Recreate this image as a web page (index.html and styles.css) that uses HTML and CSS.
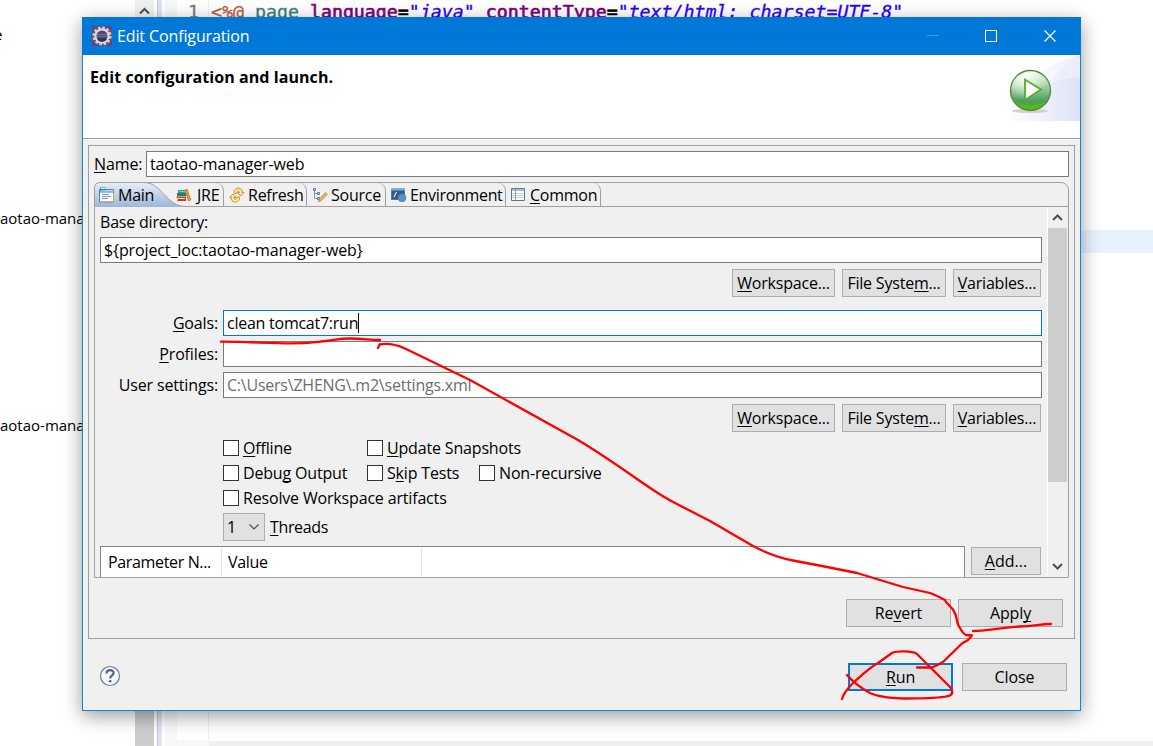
FILE: index.html
```
<!DOCTYPE html>
<html lang="en">
<head>
    <meta charset="UTF-8">
    <meta name="viewport" content="width=device-width, initial-scale=1.0">
    <title>Edit Configuration</title>
    <link rel="stylesheet" href="styles.css">
</head>
<body>
    <!-- IDE behind the dialog -->
    <div class="ide">
        <div class="explorer">
            <span class="node node-first">e</span>
            <span class="node node-second">aotao-manager</span>
            <span class="node node-third">aotao-manager</span>
        </div>
        <div class="explorer-scroll">
            <svg width="19" height="20" viewBox="0 0 19 20"><path d="M5 13.5 L9.5 9 L14 13.5" fill="none" stroke="#505050" stroke-width="2"/></svg>
            <div class="explorer-thumb"></div>
        </div>
        <div class="sash"></div>
        <div class="editor">
            <div class="ruler"></div>
            <div class="line-numbers">1</div>
            <div class="code">
                <div class="code-line"><span class="tag">&lt;%@</span> <span class="name">page</span> <span class="attr">language</span><span class="equals">=</span><i>"java"</i> <span class="attr">contentType</span><span class="equals">=</span><i>"text/html; charset=UTF-8"</i></div>
                <div class="current-line"></div>
            </div>
        </div>
    </div>

    <!-- Dialog -->
    <div class="dialog">
        <div class="title-bar">
            <svg class="app-icon" width="20" height="20" viewBox="0 0 20 20">
                <rect width="20" height="20" fill="#594a7c"/>
                <circle cx="10" cy="10" r="8.300" fill="none" stroke="#cfcdc8" stroke-width="2.600" stroke-dasharray="2.600 1.750"/>
                <circle cx="10" cy="10" r="6.600" fill="#4a4678" stroke="#dddbd3" stroke-width="2.200"/>
                <path d="M5 8.500h10M4.600 10.500h10.800" stroke="#77719c" stroke-width="1"/>
                <path d="M5 12.500h10a5.500 5.500 0 0 1-10 0z" fill="#2f2b57"/>
            </svg>
            <span class="title">Edit Configuration</span>
            <svg class="window-buttons" width="177" height="38" viewBox="0 0 177 38" fill="none">
                <path d="M23 18.500h12" stroke="#3f9ae2"/>
                <rect x="81.500" y="13.500" width="11" height="11" stroke="#fff"/>
                <path d="M140.500 13.500l11 11M151.500 13.500l-11 11" stroke="#fff" stroke-width="1.200"/>
            </svg>
        </div>

        <div class="header">
            <h1>Edit configuration and launch.</h1>
            <svg class="banner" width="80" height="66" viewBox="0 0 80 66">
                <defs>
                    <linearGradient id="sweep" x1="0" x2="1">
                        <stop offset="0" stop-color="#fff"/>
                        <stop offset=".5" stop-color="#eef1fb"/>
                        <stop offset="1" stop-color="#dde3f6"/>
                    </linearGradient>
                    <linearGradient id="ball" x1="0" x2="0" y1="0" y2="1">
                        <stop offset="0" stop-color="#e4f1dc"/>
                        <stop offset=".3" stop-color="#b5dcb0"/>
                        <stop offset=".75" stop-color="#4f9f62"/>
                        <stop offset="1" stop-color="#48ad12"/>
                    </linearGradient>
                    <radialGradient id="shine" cx=".35" cy=".15" r=".6">
                        <stop offset="0" stop-color="#fff" stop-opacity=".95"/>
                        <stop offset="1" stop-color="#fff" stop-opacity="0"/>
                    </radialGradient>
                </defs>
                <path d="M5 66C20 30 45 8 80 0v66z" fill="url(#sweep)" opacity=".45"/>
                <path d="M36 66C42 40 56 12 80 0v66z" fill="#e6eaf8" opacity=".5"/>
                <path d="M5 66C25 40 50 24 80 22v44z" fill="url(#sweep)"/>
                <ellipse cx="30" cy="56" rx="18" ry="2" fill="#b9b9b9" opacity=".6"/>
                <circle cx="30.500" cy="35.500" r="20" fill="url(#ball)" stroke="#5d8440" stroke-width="1.300"/>
                <path d="M14 45a19 19 0 0 0 33 0c-8 7-25 7-33 0z" fill="#56b520"/>
                <circle cx="30.500" cy="35.500" r="19" fill="url(#shine)"/>
                <path d="M25 24.500v20.500l16-10.500z" fill="#fff" stroke="#55ab2c" stroke-width="1.800"/>
            </svg>
        </div>

        <div class="content">
            <div class="group">
                <div class="name-row">
                    <label><u>N</u>ame:</label>
                    <div class="field">taotao-manager-web</div>
                </div>

                <div class="tab-folder">
                    <div class="tabs">
                        <div class="tab tab-main">
                            <svg class="tab-shape" width="98" height="25" viewBox="0 0 98 25">
                                <defs>
                                    <linearGradient id="active" x1="0" x2="0" y1="0" y2="1">
                                        <stop offset="0" stop-color="#e9eef4"/>
                                        <stop offset="1" stop-color="#9ab7da"/>
                                    </linearGradient>
                                </defs>
                                <path d="M0 25V6Q0 .5 6 .5H50C68 .5 72 24.500 92 24.500V25z" fill="url(#active)"/>
                                <path d="M.5 25V6Q.5 .5 6 .5H50C68 .5 72 24.500 92 24.500" fill="none" stroke="#a0a0a0"/>
                            </svg>
                            <svg class="icon" width="16" height="16" viewBox="0 0 16 16">
                                <path d="M.5 2.500h14v12.500H.5z" fill="#f6fbff" stroke="#5c7ea8"/>
                                <path d="M1 .5h5.500v3H15v2H1z" fill="#3d83b8"/>
                                <path d="M2 1.500h4M1.500 4h13" stroke="#e2f1fa"/>
                                <path d="M3 7.500h7M3 9.500h9M3 11.500h6" stroke="#7d9cbf"/>
                                <path d="M14.500 6v9H3" fill="none" stroke="#c9a65c"/>
                            </svg>
                            <span>Main</span>
                        </div>
                        <div class="tab tab-jre">
                            <svg class="icon" width="16" height="16" viewBox="0 0 16 16">
                                <path d="M2 3h7v3H2z" fill="#2f9a86"/><path d="M1 6h9v3H1z" fill="#238072"/>
                                <path d="M3 4.500h6" stroke="#7fcdbd"/>
                                <path d="M0 9.500h10V14H1l1-2z" fill="#b5482b"/><path d="M2 11.500h7" stroke="#f7dfb5"/>
                                <path d="M9 3l2-1 3.800 11-2.300 1z" fill="#e8a13a" stroke="#b8631c" stroke-width=".7"/>
                            </svg>
                            <span>JRE</span>
                        </div>
                        <div class="tab tab-refresh">
                            <svg class="icon" width="16" height="16" viewBox="0 0 16 16" fill="#fbe6a6" stroke="#c58a22" stroke-width=".9" stroke-linejoin="round">
                                <path d="M5 6.500C4.500 3 7 .8 10 1.200C12.500 1.500 13.500 3.500 13.300 5.500H15L11.700 9L8.500 5.500H10.500C10.500 3.500 7.500 3 7.500 6.500z"/>
                                <path d="M10.500 10C11 13.500 8.500 15.500 5.500 15C3.200 14.500 2 13 2.200 10.500H.5L3.800 7L7 10.500H5C5 12.700 8 13 8 10z"/>
                            </svg>
                            <span>Refresh</span>
                        </div>
                        <div class="tab tab-source">
                            <svg class="icon" width="16" height="16" viewBox="0 0 16 16">
                                <path d="M2.500 3v8.500h3M2.500 6.500h3" fill="none" stroke="#8094b8"/>
                                <path d="M1.500 1.500h2v2h-2zM5.500 5.500h2v2h-2zM5.500 10.500h2v2h-2z" fill="#d5def0" stroke="#5874a6"/>
                                <path d="M7.500 12L13.500 5.500l1.800 1.700-6 6.300-2.800 1.200z" fill="#f1b665" stroke="#b97931" stroke-width=".8"/>
                            </svg>
                            <span>Source</span>
                        </div>
                        <div class="tab tab-environment">
                            <svg class="icon" width="16" height="16" viewBox="0 0 16 16">
                                <path d="M.5 1.500h13v11H.5z" fill="#3c5686" stroke="#4d78ab"/>
                                <path d="M0 1h14v2.500H0z" fill="#74b3dc"/>
                                <path d="M3 10l2.500-5" stroke="#d6e2f2" stroke-width="1.200"/>
                                <circle cx="11" cy="10.800" r="4" fill="#5a92c6" stroke="#3f74ad" stroke-width=".6"/>
                            </svg>
                            <span>Environment</span>
                        </div>
                        <div class="tab tab-common">
                            <svg class="icon" width="16" height="16" viewBox="0 0 16 16">
                                <path d="M.5 1.500h13v12H.5z" fill="#fff" stroke="#5b779f"/>
                                <path d="M1 2h12v2H1z" fill="#a8bdd8"/>
                                <path d="M1 6.500h12M1 8.500h12M1 10.500h12" stroke="#c5cddb"/>
                                <path d="M4.500 2v11" stroke="#8c9fbd"/>
                            </svg>
                            <span><u>C</u>ommon</span>
                        </div>
                    </div>

                    <div class="tab-body">
                        <div class="form">
                            <label class="base-label">Base directory:</label>
                            <div class="field">${project_loc:taotao-manager-web}</div>
                            <div class="button-row">
                                <button class="workspace"><u>W</u>orkspace...</button>
                                <button class="file-system">File Syste<u>m</u>...</button>
                                <button class="variables"><u>V</u>ariables...</button>
                            </div>

                            <div class="settings">
                                <label><u>G</u>oals:</label>
                                <div class="field focused">clean tomcat7:run<span class="caret"></span></div>
                                <label><u>P</u>rofiles:</label>
                                <div class="field"></div>
                                <label>User settings:</label>
                                <div class="field hint">C:\Users\ZHENG\.m2\settings.xml</div>
                            </div>
                            <div class="button-row second">
                                <button class="workspace"><u>W</u>orkspace...</button>
                                <button class="file-system">File Syste<u>m</u>...</button>
                                <button class="variables"><u>V</u>ariables...</button>
                            </div>

                            <div class="options">
                                <label class="check"><input type="checkbox"><span><u>O</u>ffline</span></label>
                                <label class="check wide"><input type="checkbox"><span><u>U</u>pdate Snapshots</span></label>
                                <label class="check"><input type="checkbox"><span>Debu<u>g</u> Output</span></label>
                                <label class="check"><input type="checkbox"><span>S<u>k</u>ip Tests</span></label>
                                <label class="check"><input type="checkbox"><span>Non-recursive</span></label>
                                <label class="check full"><input type="checkbox"><span>Resolve Workspace artifacts</span></label>
                            </div>
                            <div class="threads">
                                <div class="combo">
                                    <span>1</span>
                                    <svg width="10" height="6" viewBox="0 0 10 6"><path d="M.5 .5l4.500 4.500L9.500 .5" fill="none" stroke="#505050" stroke-width="1.200"/></svg>
                                </div>
                                <label><u>T</u>hreads</label>
                            </div>

                            <div class="parameters">
                                <div class="table">
                                    <div class="column column-name">Parameter N...</div>
                                    <div class="column column-value">Value</div>
                                </div>
                                <button class="add"><u>A</u>dd...</button>
                            </div>
                        </div>

                        <div class="scrollbar">
                            <svg width="19" height="21" viewBox="0 0 19 21"><path d="M5 13l4.500-4.500L14 13" fill="none" stroke="#505050" stroke-width="2"/></svg>
                            <div class="thumb"></div>
                            <svg width="19" height="21" viewBox="0 0 19 21"><path d="M5 8l4.500 4.500L14 8" fill="none" stroke="#505050" stroke-width="2"/></svg>
                        </div>
                    </div>
                </div>

                <div class="apply-row">
                    <button>Re<u>v</u>ert</button>
                    <button>Appl<u>y</u></button>
                </div>
            </div>

            <div class="footer">
                <svg width="22" height="22" viewBox="0 0 22 22">
                    <circle cx="11" cy="11" r="9.500" fill="#f6f6f6" stroke="#6b7b99" stroke-width="1.200"/>
                    <path d="M7.500 8.500C7.500 4 14.600 4 14.600 8.100C14.600 10.500 11.200 10.500 11.200 13.500" fill="none" stroke="#4f648c" stroke-width="2.200"/>
                    <circle cx="11.200" cy="16.300" r="1.300" fill="#4f648c"/>
                </svg>
                <div class="footer-buttons">
                    <button class="default"><u>R</u>un</button>
                    <button>Close</button>
                </div>
            </div>
        </div>
    </div>

    <!-- Freehand pen marks over the dialog -->
    <svg class="pen" width="1153" height="746" viewBox="0 0 1153 746">
        <path d="M221 341.700C250 342 270 343.300 290 343.300S315 342 326 341S338 338.500 350 338.500S370 340 380 340"/>
        <path d="M378 348L379.500 344.500C388 343 396 344.500 405 348.500L470 380L578 440C598 452 617 465 637 479S665 498 675 503L710 521L753 546C768 554 780 558 793 560.500L827 567L857 573L903 587L930 593Q938 596 945 600L946 602L953 609.500C958 617 956 621 958.500 625.500C961 630 963 634 966 635L972 635.500L968 640L962 643.500L943 662Q938 665 932 667.500L917 667.500"/>
        <path d="M973 631C989 631 1005 627 1020 626.500S1040 624 1051 624"/>
        <path d="M842 699Q844 692 853 683C862 675 869 668 878 663L892 653C896 651 912 650.500 917 654L930 667L951 688Q954 693 950 695.500C940 699 920 698 903 698.500C890 698 876 696 870 693C861 688 853 682 847 675"/>
    </svg>
</body>
</html>
```
FILE: styles.css
```
* {
    box-sizing: border-box;
}

body {
    margin: 0;
    height: 746px;
    overflow: hidden;
    position: relative;
    background: #fff;
    color: #000;
    font-family: "Open Sans", "Noto Sans", sans-serif;
    font-size: 16px;
    line-height: 20px;
    letter-spacing: -0.12px;
}

svg {
    display: block;
    flex: none;
}

u {
    text-decoration-thickness: 1px;
    text-underline-offset: 2px;
    text-decoration-skip-ink: none;
}

/* IDE background */
.ide {
    display: flex;
    height: 746px;
}

.explorer {
    width: 135px;
    overflow: hidden;
    font-size: 15px;
    letter-spacing: 0;
}

.node {
    display: block;
}

.node-first {
    margin: 24px 0 0 -6px;
}

.node-second {
    margin-top: 164px;
}

.node-third {
    margin-top: 187px;
}

.explorer-scroll {
    width: 19px;
    background: #f0f0f0;
}

.explorer-thumb {
    height: 726px;
    background: #cdcdcd;
}

.sash {
    width: 8px;
    margin-left: 3px;
    background: #dfe4f5;
    border-left: 1px solid #c4c8d0;
    border-right: 3px solid #fff;
}

.editor {
    display: flex;
    flex: 1;
    font-family: "DejaVu Sans Mono", monospace;
    font-size: 18.25px;
    line-height: 23px;
    letter-spacing: 0;
}

.ruler {
    width: 12px;
    background: #f8f8f8;
}

.line-numbers {
    width: 32px;
    padding-left: 11px;
    border-right: 1px solid #efefef;
    border-bottom: 6px solid #f8f8f8;
    color: #787878;
    -webkit-text-stroke: 0.3px;
}

.code {
    flex: 1;
    padding-left: 2px;
    border-bottom: 5px solid #efefef;
}

.code-line {
    height: 23px;
    color: #2a00ff;
    white-space: pre;
    -webkit-text-stroke: 0.3px;
}

.tag {
    color: #bf5f3f;
}

.name {
    color: #3f7f7f;
}

.attr {
    color: #7f007f;
    -webkit-text-stroke: 0.6px;
}

.equals {
    color: #000;
    -webkit-text-stroke: 0.6px;
}

.current-line {
    height: 23px;
    margin-top: 207px;
    margin-left: -2px;
    background: #e8f2fe;
}

/* Dialog */
.dialog {
    position: absolute;
    left: 82px;
    top: 17px;
    width: 999px;
    height: 694px;
    display: flex;
    flex-direction: column;
    border: 1px solid #1883d7;
    border-top: none;
    background: #f0f0f0;
    box-shadow: 0 5px 18px rgba(0, 0, 0, 0.4);
}

.title-bar {
    height: 38px;
    margin: 0 -1px;
    padding-left: 10px;
    display: flex;
    align-items: center;
    background: #0078d7;
    color: #fff;
}

.title {
    margin-left: 5px;
    flex: 1;
}

.header {
    height: 84px;
    display: flex;
    justify-content: space-between;
    background: #fff;
    border-bottom: 1px solid #a0a0a0;
}

.header h1 {
    margin: 12px 0 0 7px;
    font-size: 16px;
    line-height: 20px;
    letter-spacing: 0.07px;
}

.content {
    padding: 5px 5px 0;
    border-top: 1px solid #fff;
}

.group {
    height: 494px;
    padding: 5px;
    border: 1px solid #a0a0a0;
}

.name-row {
    display: flex;
    align-items: center;
}

.name-row label {
    width: 52px;
}

.name-row .field {
    flex: 1;
}

.field {
    height: 26px;
    padding: 0 3px;
    display: flex;
    align-items: center;
    background: #fff;
    border: 1px solid #7a7a7a;
}

.field.focused {
    border-color: #0078d7;
    letter-spacing: -0.25px;
}

.field.hint {
    color: #6d6d6d;
    letter-spacing: -0.23px;
}

.caret {
    width: 1px;
    height: 20px;
    background: #000;
}

button {
    height: 28px;
    padding: 0;
    background: #e1e1e1;
    border: 1px solid #adadad;
    color: #000;
    font: inherit;
    letter-spacing: inherit;
}

/* Tabs */
.tab-folder {
    height: 396px;
    margin-top: 5px;
    display: flex;
    flex-direction: column;
    border: 1px solid #a0a0a0;
    border-radius: 8px 8px 0 0;
}

.tabs {
    height: 24px;
    display: flex;
    border-bottom: 1px solid #a0a0a0;
}

.tab {
    height: 23px;
    display: flex;
    align-items: center;
    padding-left: 5px;
    border-right: 1px solid #a0a0a0;
    border-radius: 0 8px 0 0;
    white-space: nowrap;
    letter-spacing: -0.25px;
}

.tab .icon {
    margin-right: 3px;
}

.tab span {
    position: relative;
    padding-top: 1px;
}

.tab-main {
    position: relative;
    width: 76px;
    padding-left: 4px;
    border-right: none;
}

.tab-main .icon {
    position: relative;
}

.tab-shape {
    position: absolute;
    left: -1px;
    top: -1px;
}

.tab-jre {
    width: 53px;
    position: relative;
}

.tab-jre .icon {
    margin-right: 5px;
}

.tab-refresh {
    width: 83px;
}

.tab-source {
    width: 79px;
}

.tab-environment {
    width: 120px;
    letter-spacing: -0.32px;
}

.tab-common {
    width: 95px;
}

.tab-body {
    flex: 1;
    min-height: 0;
    display: flex;
    overflow: hidden;
}

.form {
    flex: 1;
    padding: 0 5px;
}

.base-label {
    display: block;
    height: 30px;
    padding-top: 5px;
    letter-spacing: -0.2px;
}

.button-row {
    display: flex;
    justify-content: flex-end;
    gap: 7px;
    margin: 6px 1px 13px 0;
    letter-spacing: -0.2px;
}

.button-row.second {
    margin-bottom: 8px;
}

.workspace {
    width: 103px;
}

.file-system {
    width: 104px;
}

.variables {
    width: 88px;
}

.settings {
    display: grid;
    grid-template-columns: 118px 1fr;
    gap: 5px;
    align-items: center;
}

.settings label {
    text-align: right;
    letter-spacing: -0.15px;
}

.options {
    display: grid;
    grid-template-columns: 144px 112px 1fr;
    row-gap: 9px;
    margin-left: 123px;
    letter-spacing: -0.17px;
}

.check {
    height: 16px;
    display: flex;
    align-items: center;
    gap: 4px;
    white-space: nowrap;
}

.check input {
    appearance: none;
    width: 16px;
    height: 16px;
    margin: 0;
    background: #fff;
    border: 1px solid #333;
}

.wide {
    grid-column: span 2;
}

.full {
    grid-column: span 3;
}

.threads {
    display: flex;
    align-items: center;
    gap: 5px;
    margin: 7px 0 5px 123px;
    letter-spacing: -0.35px;
}

.combo {
    width: 42px;
    height: 28px;
    padding: 0 5px 0 3px;
    display: flex;
    align-items: center;
    justify-content: space-between;
    background: #e1e1e1;
    border: 1px solid #adadad;
}

.parameters {
    display: flex;
    gap: 6px;
    letter-spacing: -0.35px;
}

.table {
    width: 865px;
    height: 60px;
    display: flex;
    background: #fff;
    border: 1px solid #828790;
}

.column {
    margin-top: 1px;
    padding: 4px 0 0 7px;
    border-right: 1px solid #e5e5e5;
}

.column-name {
    width: 121px;
}

.column-value {
    width: 200px;
    padding-left: 6px;
}

.add {
    width: 70px;
    margin-top: 1px;
    letter-spacing: 0;
}

.scrollbar {
    width: 21px;
    padding-right: 1px;
    border-left: 1px solid #fff;
    display: flex;
    flex-direction: column;
}

.thumb {
    height: 254px;
    margin-bottom: 74px;
    background: #cdcdcd;
}

/* Bottom buttons */
.apply-row {
    display: flex;
    justify-content: flex-end;
    gap: 7px;
    margin: 21px 6px 0 0;
}

.apply-row button,
.footer-buttons button {
    width: 105px;
}

.footer {
    display: flex;
    align-items: flex-start;
    justify-content: space-between;
    padding: 24px 8px 0 11px;
}

.footer > svg {
    margin-top: 2px;
}

.footer-buttons {
    display: flex;
    gap: 9px;
}

.footer-buttons .default {
    border: 2px solid #0078d7;
}

.pen {
    position: absolute;
    left: 0;
    top: 0;
    fill: none;
    stroke: #f00;
    stroke-width: 2.3;
    stroke-linecap: round;
    stroke-linejoin: round;
    pointer-events: none;
}
```
